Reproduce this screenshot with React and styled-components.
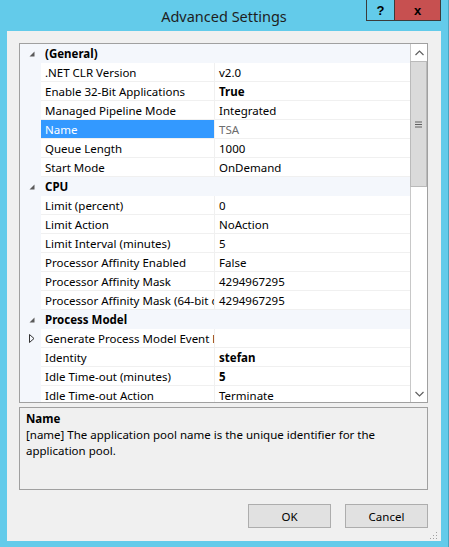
import React from "react";
import styled, { createGlobalStyle } from "styled-components";

const UI_FONT = `"Noto Sans", "Liberation Sans", sans-serif`;

const GlobalStyle = createGlobalStyle`
  html, body {
    margin: 0;
    padding: 0;
    background: #63cbea;
  }
  * {
    box-sizing: border-box;
  }
`;

const sections = [
  {
    name: "(General)",
    rows: [
      { label: ".NET CLR Version", value: "v2.0" },
      { label: "Enable 32-Bit Applications", value: "True", bold: true },
      { label: "Managed Pipeline Mode", value: "Integrated" },
      { label: "Name", value: "TSA", selected: true, readOnly: true },
      { label: "Queue Length", value: "1000" },
      { label: "Start Mode", value: "OnDemand" },
    ],
  },
  {
    name: "CPU",
    rows: [
      { label: "Limit (percent)", value: "0" },
      { label: "Limit Action", value: "NoAction" },
      { label: "Limit Interval (minutes)", value: "5" },
      { label: "Processor Affinity Enabled", value: "False" },
      { label: "Processor Affinity Mask", value: "4294967295" },
      { label: "Processor Affinity Mask (64-bit option)", value: "4294967295" },
    ],
  },
  {
    name: "Process Model",
    rows: [
      { label: "Generate Process Model Event Log Entry", value: "", collapsed: true },
      { label: "Identity", value: "stefan", bold: true },
      { label: "Idle Time-out (minutes)", value: "5", bold: true },
      { label: "Idle Time-out Action", value: "Terminate" },
    ],
  },
];

const Window = styled.div`
  width: 449px;
  height: 547px;
  display: flex;
  flex-direction: column;
  padding: 0 7px 6px 7px;
  background: #63cbea;
  border-right: 1px solid #4aa5c0;
  font-family: ${UI_FONT};
`;

const TitleBar = styled.div`
  height: 31px;
  display: grid;
  grid-template-columns: 1fr auto 1fr;
  align-items: start;
`;

const Title = styled.div`
  grid-column: 2;
  padding-top: 6px;
  font-size: 14.5px;
  color: #1e1e1e;
  white-space: nowrap;
`;

const CaptionButtons = styled.div`
  grid-column: 3;
  justify-self: end;
  display: flex;
`;

const CaptionButton = styled.div`
  width: ${(p) => p.$w}px;
  height: 21px;
  display: flex;
  align-items: center;
  justify-content: center;
  background: ${(p) => p.$bg};
  border: 1px solid #3b3b3b;
  border-top: none;
  margin-left: -1px;
  font-family: "Liberation Sans", sans-serif;
  font-weight: 700;
  font-size: 13px;
  color: #000;
`;

const Body = styled.div`
  flex: 1;
  display: flex;
  flex-direction: column;
  padding: 12px 13px 13px 12px;
  background: #f0f0f0;
  position: relative;
`;

const Grid = styled.div`
  height: 360px;
  display: flex;
  border: 1px solid #a0a0a0;
  background: #fff;
  overflow: hidden;
`;

const List = styled.div`
  flex: 1;
  overflow: hidden;
`;

const CategoryRow = styled.div`
  height: 19px;
  display: flex;
  align-items: center;
  background: #f4f7fc;
  font-size: 11.5px;
  font-weight: 700;
  color: #000;
`;

const Gutter = styled.div`
  width: 21px;
  height: 100%;
  flex: none;
  display: flex;
  align-items: center;
  justify-content: center;
  padding-left: 2px;
  background: #f4f7fc;
`;

const CategoryName = styled.div`
  padding-left: 4px;
`;

const PropRow = styled.div`
  height: 19px;
  display: flex;
  font-size: 11.5px;
`;

const Label = styled.div`
  width: 174px;
  flex: none;
  display: flex;
  align-items: center;
  padding-left: 4px;
  white-space: nowrap;
  overflow: hidden;
  border-bottom: 1px solid #f0f0f0;
  border-right: 1px solid #f0f0f0;
  background: ${(p) => (p.$selected ? "#3399ff" : "#fff")};
  color: ${(p) => (p.$selected ? "#fff" : "#000")};
`;

const Value = styled.div`
  flex: 1;
  display: flex;
  align-items: center;
  padding-left: 4px;
  white-space: nowrap;
  overflow: hidden;
  border-bottom: 1px solid #f0f0f0;
  font-weight: ${(p) => (p.$bold ? 700 : 400)};
  color: ${(p) => (p.$readOnly ? "#6d6d6d" : "#000")};
`;

const ScrollBar = styled.div`
  width: 17px;
  flex: none;
  display: flex;
  flex-direction: column;
  background: #fff;
  border-left: 1px solid #c8c8c8;
`;

const ArrowButton = styled.div`
  height: 17px;
  flex: none;
  display: flex;
  align-items: center;
  justify-content: center;
  background: #fff;
`;

const Track = styled.div`
  flex: 1;
  display: flex;
  flex-direction: column;
`;

const Thumb = styled.div`
  height: 126px;
  display: flex;
  align-items: center;
  justify-content: center;
  background: #dadada;
  border: 1px solid #bababa;
  margin-left: -1px;
`;

const Description = styled.div`
  height: 83px;
  margin-top: 4px;
  padding: 3px 6px;
  border: 1px solid #a0a0a0;
  background: #f0f0f0;
  font-size: 11.5px;
  line-height: 16px;
  color: #000;
`;

const DescTitle = styled.div`
  font-weight: 700;
`;

const ButtonRow = styled.div`
  margin-top: 14px;
  display: flex;
  justify-content: flex-end;
  gap: 14px;
`;

const Button = styled.button`
  width: 83px;
  height: 24px;
  border: 1px solid #adadad;
  background: #e1e1e1;
  font-family: ${UI_FONT};
  font-size: 11.5px;
  color: #000;
  padding: 0;
`;

const Grip = styled.svg`
  position: absolute;
  right: 3px;
  bottom: 1px;
`;

function ExpandedGlyph() {
  return (
    <svg width="6" height="6" viewBox="0 0 6 6">
      <polygon points="5.5,0.5 5.5,5.5 0.5,5.5" fill="#5a5a5a" />
    </svg>
  );
}

function CollapsedGlyph() {
  return (
    <svg width="6" height="9" viewBox="0 0 6 9">
      <polygon points="0.5,0.5 5,4.5 0.5,8.5" fill="none" stroke="#333" strokeWidth="1" />
    </svg>
  );
}

function Chevron({ up }) {
  return (
    <svg width="9" height="6" viewBox="0 0 9 6">
      <polyline
        points={up ? "0.5,5 4.5,1 8.5,5" : "0.5,1 4.5,5 8.5,1"}
        fill="none"
        stroke="#606060"
        strokeWidth="1.2"
      />
    </svg>
  );
}

function GripLines() {
  return (
    <svg width="7" height="7" viewBox="0 0 7 7">
      <rect x="0" y="0.5" width="7" height="1" fill="#606060" />
      <rect x="0" y="3" width="7" height="1" fill="#606060" />
      <rect x="0" y="5.5" width="7" height="1" fill="#606060" />
    </svg>
  );
}

export default function App() {
  return (
    <>
      <GlobalStyle />
      <Window>
        <TitleBar>
          <Title>Advanced Settings</Title>
          <CaptionButtons>
            <CaptionButton $w={29} $bg="#63cbea">?</CaptionButton>
            <CaptionButton $w={47} $bg="#c75050">x</CaptionButton>
          </CaptionButtons>
        </TitleBar>
        <Body>
          <Grid>
            <List>
              {sections.map((s) => (
                <React.Fragment key={s.name}>
                  <CategoryRow>
                    <Gutter>
                      <ExpandedGlyph />
                    </Gutter>
                    <CategoryName>{s.name}</CategoryName>
                  </CategoryRow>
                  {s.rows.map((r) => (
                    <PropRow key={r.label}>
                      <Gutter>{r.collapsed && <CollapsedGlyph />}</Gutter>
                      <Label $selected={r.selected}>{r.label}</Label>
                      <Value $bold={r.bold} $readOnly={r.readOnly}>
                        {r.value}
                      </Value>
                    </PropRow>
                  ))}
                </React.Fragment>
              ))}
            </List>
            <ScrollBar>
              <ArrowButton>
                <Chevron up />
              </ArrowButton>
              <Track>
                <Thumb>
                  <GripLines />
                </Thumb>
              </Track>
              <ArrowButton>
                <Chevron />
              </ArrowButton>
            </ScrollBar>
          </Grid>
          <Description>
            <DescTitle>Name</DescTitle>
            <div>
              [name] The application pool name is the unique identifier for the
              <br />
              application pool.
            </div>
          </Description>
          <ButtonRow>
            <Button>OK</Button>
            <Button>Cancel</Button>
          </ButtonRow>
          <Grip width="8" height="8" viewBox="0 0 8 8">
            <rect x="6" y="0" width="1" height="1" fill="#a0a0a0" />
            <rect x="3" y="3" width="1" height="1" fill="#a0a0a0" />
            <rect x="6" y="3" width="1" height="1" fill="#a0a0a0" />
            <rect x="0" y="6" width="1" height="1" fill="#a0a0a0" />
            <rect x="3" y="6" width="1" height="1" fill="#a0a0a0" />
            <rect x="6" y="6" width="1" height="1" fill="#a0a0a0" />
          </Grip>
        </Body>
      </Window>
    </>
  );
}
